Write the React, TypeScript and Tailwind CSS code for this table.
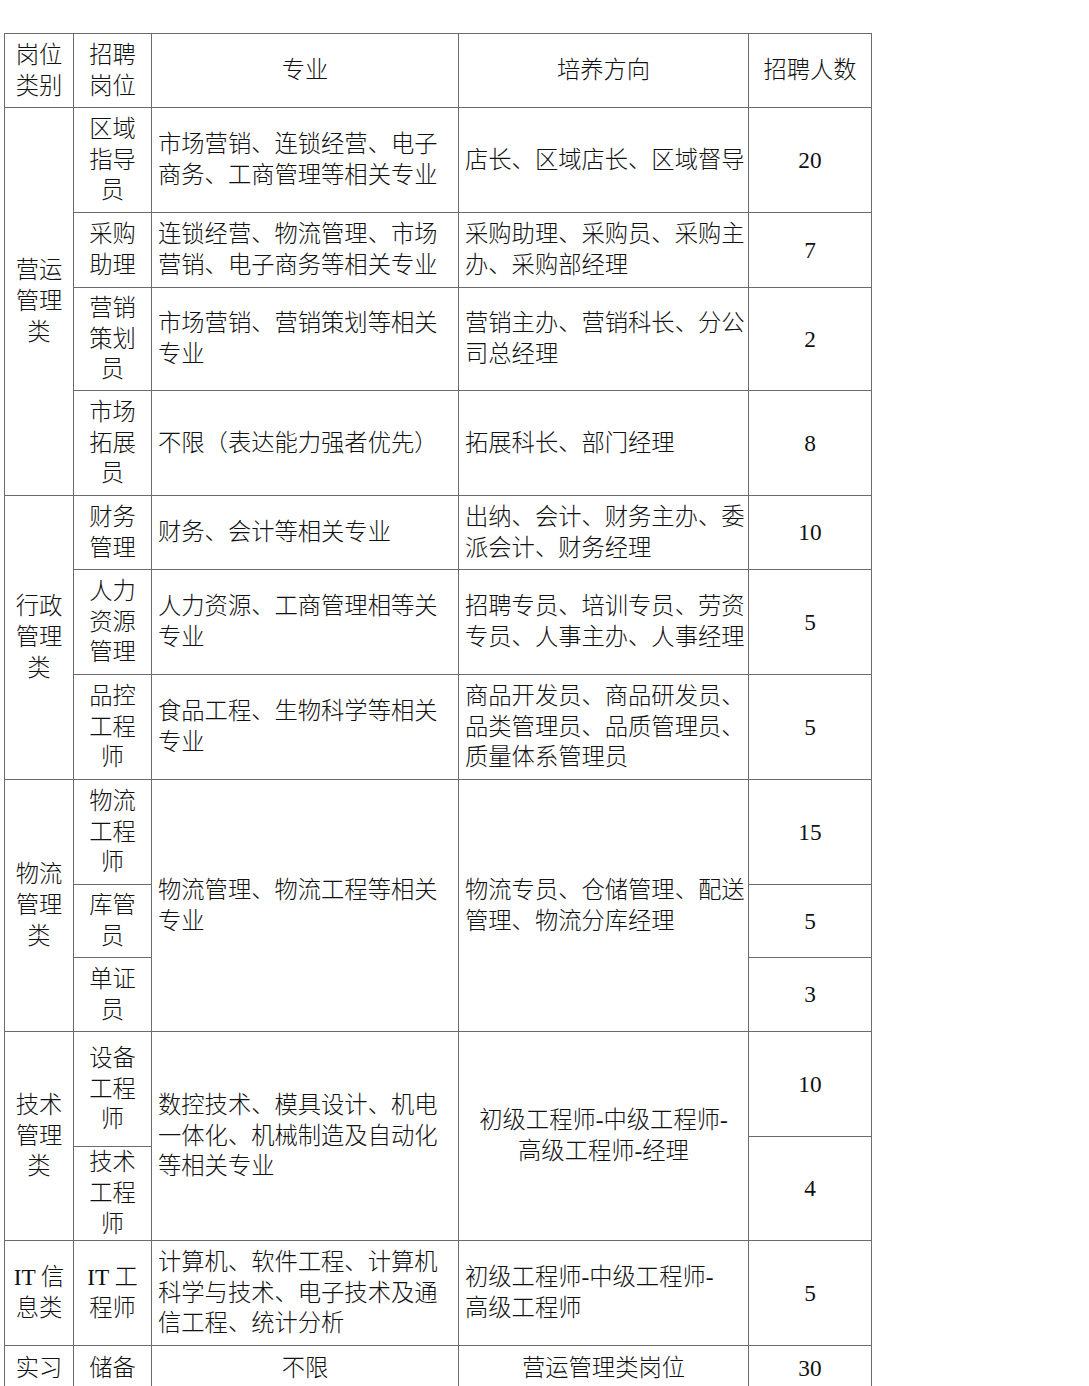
import React from "react";

type CellProps = {
  lines: string[];
  rowSpan?: number;
  align?: "center" | "left";
};

function Cell({ lines, rowSpan, align = "center" }: CellProps) {
  return (
    <td
      rowSpan={rowSpan}
      className={
        align === "left"
          ? "border border-[#6b6b6b] p-0 pl-[6px] text-left align-middle whitespace-nowrap"
          : "border border-[#6b6b6b] p-0 text-center align-middle whitespace-nowrap"
      }
    >
      {lines.map((l, i) => (
        <div key={i}>{l}</div>
      ))}
    </td>
  );
}

export default function App() {
  return (
    <div className="min-h-screen bg-white pt-[33px] pl-[4px] text-[#111] font-['Liberation_Serif','Noto_Sans_CJK_SC',serif] text-[23.3px] leading-[30.7px] font-light">
      <table className="table-fixed border-collapse w-[868px]">
        <colgroup>
          <col className="w-[69px]" />
          <col className="w-[78px]" />
          <col className="w-[307px]" />
          <col className="w-[290px]" />
          <col className="w-[123px]" />
        </colgroup>
        <tbody>
          <tr className="h-[74px]">
            <Cell lines={["岗位", "类别"]} />
            <Cell lines={["招聘", "岗位"]} />
            <Cell lines={["专业"]} />
            <Cell lines={["培养方向"]} />
            <Cell lines={["招聘人数"]} />
          </tr>

          {/* 营运管理类 */}
          <tr className="h-[105px]">
            <Cell rowSpan={4} lines={["营运", "管理", "类"]} />
            <Cell lines={["区域", "指导", "员"]} />
            <Cell align="left" lines={["市场营销、连锁经营、电子", "商务、工商管理等相关专业"]} />
            <Cell align="left" lines={["店长、区域店长、区域督导"]} />
            <Cell lines={["20"]} />
          </tr>
          <tr className="h-[75px]">
            <Cell lines={["采购", "助理"]} />
            <Cell align="left" lines={["连锁经营、物流管理、市场", "营销、电子商务等相关专业"]} />
            <Cell align="left" lines={["采购助理、采购员、采购主", "办、采购部经理"]} />
            <Cell lines={["7"]} />
          </tr>
          <tr className="h-[103px]">
            <Cell lines={["营销", "策划", "员"]} />
            <Cell align="left" lines={["市场营销、营销策划等相关", "专业"]} />
            <Cell align="left" lines={["营销主办、营销科长、分公", "司总经理"]} />
            <Cell lines={["2"]} />
          </tr>
          <tr className="h-[105px]">
            <Cell lines={["市场", "拓展", "员"]} />
            <Cell align="left" lines={["不限（表达能力强者优先）"]} />
            <Cell align="left" lines={["拓展科长、部门经理"]} />
            <Cell lines={["8"]} />
          </tr>

          {/* 行政管理类 */}
          <tr className="h-[74px]">
            <Cell rowSpan={3} lines={["行政", "管理", "类"]} />
            <Cell lines={["财务", "管理"]} />
            <Cell align="left" lines={["财务、会计等相关专业"]} />
            <Cell align="left" lines={["出纳、会计、财务主办、委", "派会计、财务经理"]} />
            <Cell lines={["10"]} />
          </tr>
          <tr className="h-[105px]">
            <Cell lines={["人力", "资源", "管理"]} />
            <Cell align="left" lines={["人力资源、工商管理相等关", "专业"]} />
            <Cell align="left" lines={["招聘专员、培训专员、劳资", "专员、人事主办、人事经理"]} />
            <Cell lines={["5"]} />
          </tr>
          <tr className="h-[105px]">
            <Cell lines={["品控", "工程", "师"]} />
            <Cell align="left" lines={["食品工程、生物科学等相关", "专业"]} />
            <Cell align="left" lines={["商品开发员、商品研发员、", "品类管理员、品质管理员、", "质量体系管理员"]} />
            <Cell lines={["5"]} />
          </tr>

          {/* 物流管理类 */}
          <tr className="h-[105px]">
            <Cell rowSpan={3} lines={["物流", "管理", "类"]} />
            <Cell lines={["物流", "工程", "师"]} />
            <Cell rowSpan={3} align="left" lines={["物流管理、物流工程等相关", "专业"]} />
            <Cell rowSpan={3} align="left" lines={["物流专员、仓储管理、配送", "管理、物流分库经理"]} />
            <Cell lines={["15"]} />
          </tr>
          <tr className="h-[73px]">
            <Cell lines={["库管", "员"]} />
            <Cell lines={["5"]} />
          </tr>
          <tr className="h-[74px]">
            <Cell lines={["单证", "员"]} />
            <Cell lines={["3"]} />
          </tr>

          {/* 技术管理类 */}
          <tr className="h-[105px]">
            <Cell rowSpan={3} lines={["技术", "管理", "类"]} />
            <Cell rowSpan={2} lines={["设备", "工程", "师"]} />
            <Cell rowSpan={3} align="left" lines={["数控技术、模具设计、机电", "一体化、机械制造及自动化", "等相关专业"]} />
            <Cell rowSpan={3} lines={["初级工程师-中级工程师-", "高级工程师-经理"]} />
            <Cell lines={["10"]} />
          </tr>
          <tr className="h-[10px]">
            <Cell rowSpan={2} lines={["4"]} />
          </tr>
          <tr className="h-[94px]">
            <Cell lines={["技术", "工程", "师"]} />
          </tr>

          {/* IT信息类 */}
          <tr className="h-[105px]">
            <Cell lines={["IT 信", "息类"]} />
            <Cell lines={["IT 工", "程师"]} />
            <Cell align="left" lines={["计算机、软件工程、计算机", "科学与技术、电子技术及通", "信工程、统计分析"]} />
            <Cell align="left" lines={["初级工程师-中级工程师-", "高级工程师"]} />
            <Cell lines={["5"]} />
          </tr>

          {/* 实习 */}
          <tr className="h-[46px]">
            <Cell lines={["实习"]} />
            <Cell lines={["储备"]} />
            <Cell lines={["不限"]} />
            <Cell lines={["营运管理类岗位"]} />
            <Cell lines={["30"]} />
          </tr>
        </tbody>
      </table>
    </div>
  );
}
